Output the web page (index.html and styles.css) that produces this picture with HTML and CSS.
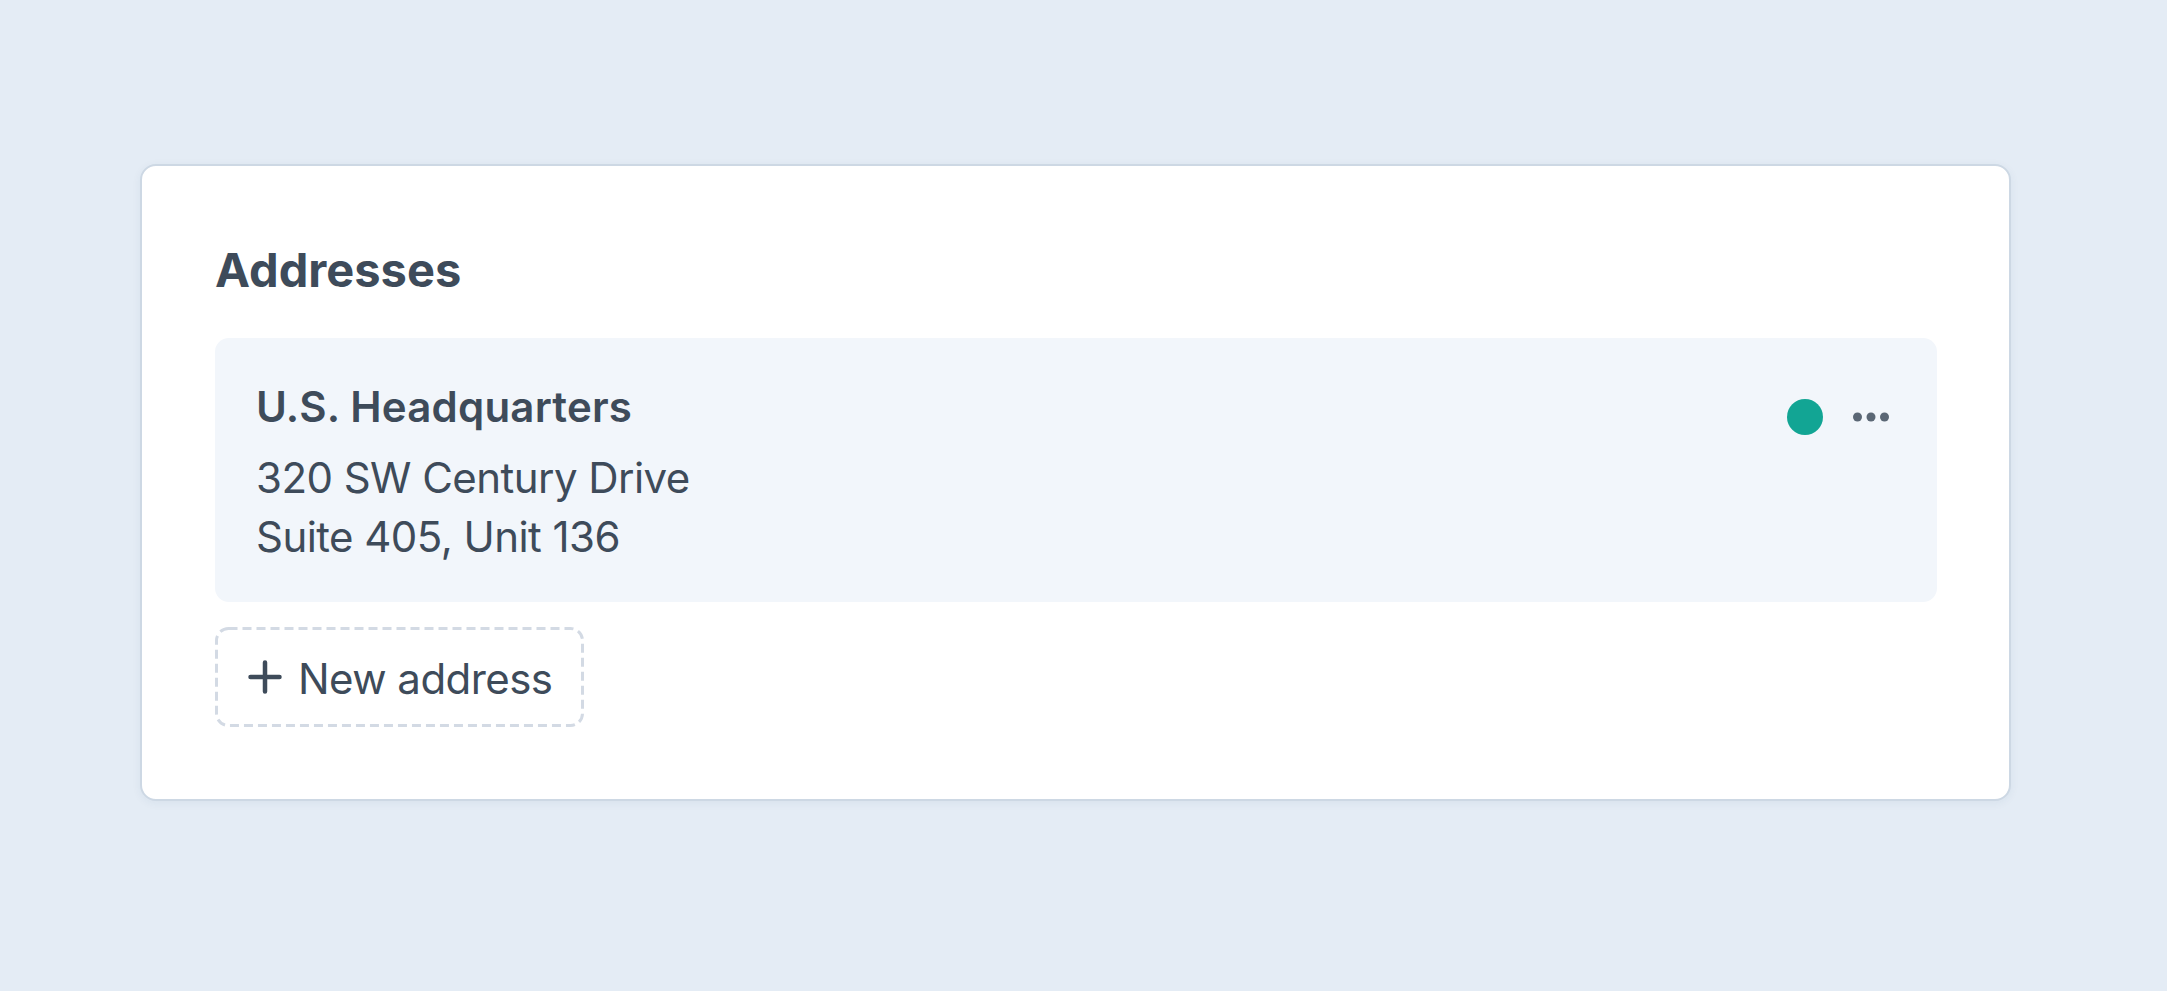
FILE: index.html
```html
<!DOCTYPE html>
<html lang="en">
<head>
<meta charset="utf-8">
<title>Addresses</title>
<link rel="stylesheet" href="styles.css">
</head>
<body>
<main class="page">
  <section class="card">
    <h1 class="card-title">Addresses</h1>
    <div class="address">
      <div class="address-body">
        <h2 class="address-name">U.S. Headquarters</h2>
        <p class="address-line">320 SW Century Drive</p>
        <p class="address-line">Suite 405, Unit 136</p>
      </div>
      <div class="address-actions">
        <span class="status-dot"></span>
        <button class="more" aria-label="More options">
          <svg width="36" height="10" viewBox="0 0 36 10"><circle cx="4.5" cy="5" r="4.5"/><circle cx="18" cy="5" r="4.5"/><circle cx="31.5" cy="5" r="4.5"/></svg>
        </button>
      </div>
    </div>
    <button class="new-address">
      <svg class="dash" width="369" height="100" viewBox="0 0 369 100"><rect x="1.5" y="1.5" width="366" height="97" rx="12" ry="12"/></svg>
      <svg class="plus" width="34" height="34" viewBox="0 0 34 34"><path d="M17 2.5V31.5M2.5 17H31.5"/></svg>
      <span class="new-label">New address</span>
    </button>
  </section>
</main>
</body>
</html>
```
FILE: styles.css
```css
* { box-sizing: border-box; }
html, body { margin: 0; padding: 0; }
body {
  background: #e4ecf5;
  font-family: Inter, "Noto Sans", "Liberation Sans", sans-serif;
  color: #3e4b5a;
  width: 2167px;
  height: 991px;
  overflow: hidden;
}
.page {
  padding: 164px 0 0 140px;
}
.card {
  width: 1871px;
  background: #ffffff;
  border: 2px solid #cdd8e4;
  border-radius: 16px;
  box-shadow: 0 2px 10px rgba(40, 70, 110, 0.06);
  padding: 76px 72px 72px 73px;
}
.card-title {
  margin: 0 0 40px;
  font-size: 47px;
  line-height: 56px;
  font-weight: 700;
  letter-spacing: 0;
  color: #3e4b5a;
}
.address {
  display: flex;
  justify-content: space-between;
  align-items: flex-start;
  background: #f2f6fb;
  border-radius: 14px;
  padding: 39px 48px 36px 41px;
}
.address-name {
  margin: 0 0 12px;
  font-size: 42px;
  line-height: 59px;
  font-weight: 600;
  letter-spacing: 0.2px;
}
.address-line {
  margin: 0;
  font-size: 42px;
  line-height: 59px;
  font-weight: 400;
  letter-spacing: -0.55px;
}
.address-actions {
  display: flex;
  align-items: center;
  gap: 30px;
  padding-top: 22px;
}
.status-dot {
  width: 36px;
  height: 36px;
  border-radius: 50%;
  background: #12a594;
}
.more {
  display: flex;
  padding: 0;
  border: 0;
  background: none;
  fill: #5b6775;
}
.new-address {
  position: relative;
  display: flex;
  align-items: center;
  gap: 16px;
  width: 369px;
  height: 100px;
  margin-top: 25px;
  padding: 3px 0 0 33px;
  border: 0;
  background: none;
  font-family: inherit;
  color: #3e4b5a;
}
.dash {
  position: absolute;
  left: 0;
  top: 0;
  fill: none;
  stroke: #d3dae4;
  stroke-width: 3;
  stroke-dasharray: 9 5;
}
.plus {
  flex: none;
  margin-top: -3px;
  fill: none;
  stroke: #3e4b5a;
  stroke-width: 4.5;
  stroke-linecap: round;
}
.new-label {
  font-size: 42px;
  line-height: 59px;
  font-weight: 400;
  letter-spacing: -0.55px;
}
```
